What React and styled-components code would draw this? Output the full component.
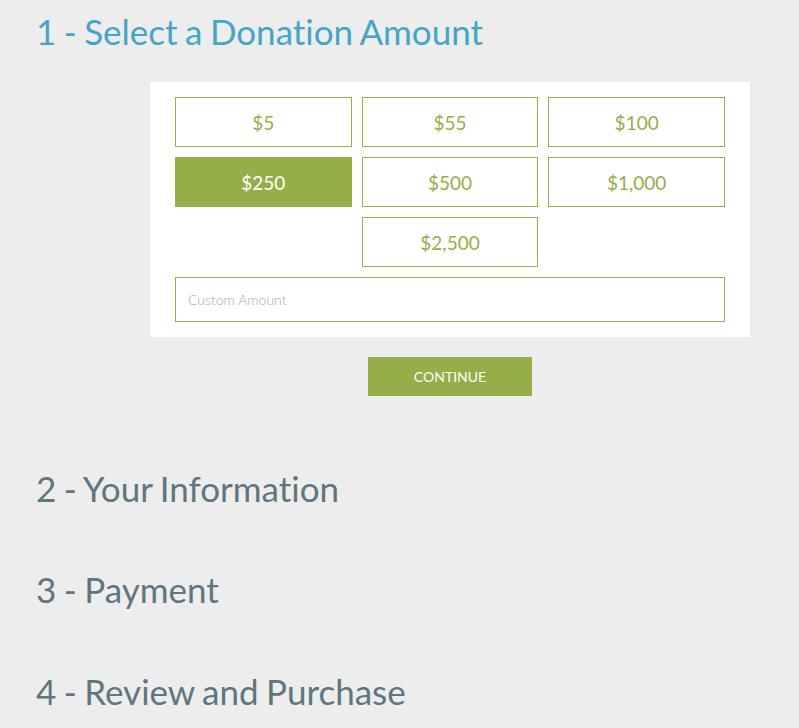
import React, { useState } from 'react';
import styled, { createGlobalStyle } from 'styled-components';

const GlobalStyle = createGlobalStyle`
  html, body {
    margin: 0;
    padding: 0;
    background: #ededed;
    font-family: Lato, "Open Sans", Arial, sans-serif;
  }
`;

const Page = styled.div`
  display: flex;
  flex-direction: column;
  padding: 10px 0 40px 36px;
`;

const StepTitle = styled.h2`
  margin: 0;
  font-size: 35px;
  line-height: 42px;
  font-weight: 400;
  word-spacing: -1.5px;
  font-variant-ligatures: none;
  font-feature-settings: "liga" 0, "clig" 0, "dlig" 0;
  color: ${props => (props.active ? '#44a6c6' : '#5e7680')};
`;

const Panel = styled.div`
  width: 550px;
  margin: 30px 0 0 114px;
  padding: 15px 25px;
  background: #fff;
  display: flex;
  flex-direction: column;
  gap: 10px;
`;

const AmountGrid = styled.div`
  display: grid;
  grid-template-columns: repeat(3, 1fr);
  gap: 10px;
`;

const AmountButton = styled.button`
  height: 50px;
  border: 1px solid #96ae48;
  background: ${props => (props.selected ? '#96ae48' : '#fff')};
  color: ${props => (props.selected ? '#fff' : '#96ae48')};
  font-family: Lato, "Open Sans", Arial, sans-serif;
  font-size: 19px;
  padding: 1px 0 0;
  cursor: pointer;
  grid-column: ${props => props.col || 'auto'};
`;

const CustomInput = styled.input`
  box-sizing: border-box;
  width: 100%;
  height: 45px;
  border: 1px solid #96ae48;
  padding: 0 12px;
  font-family: Lato, "Open Sans", Arial, sans-serif;
  font-size: 14px;
  font-weight: 300;
  outline: none;

  &::placeholder {
    color: #a9a9a9;
  }
`;

const ContinueRow = styled.div`
  width: 600px;
  margin-left: 114px;
  margin-top: 20px;
  display: flex;
  justify-content: center;
`;

const ContinueButton = styled.button`
  width: 164px;
  height: 39px;
  border: none;
  background: #96ae48;
  color: #fff;
  font-family: Lato, "Open Sans", Arial, sans-serif;
  font-size: 14px;
  text-transform: uppercase;
  cursor: pointer;
`;

const Step = styled.div`
  margin-top: ${props => props.gap}px;
`;

const amounts = ['$5', '$55', '$100', '$250', '$500', '$1,000', '$2,500'];

const App = () => {
  const [selected, setSelected] = useState('$250');

  return (
    <>
      <GlobalStyle />
      <Page>
        <StepTitle active>1 - Select a Donation Amount</StepTitle>
        <Panel>
          <AmountGrid>
            {amounts.map(a => (
              <AmountButton
                key={a}
                selected={selected === a}
                col={a === '$2,500' ? '2' : undefined}
                onClick={() => setSelected(a)}
              >
                {a}
              </AmountButton>
            ))}
          </AmountGrid>
          <CustomInput placeholder="Custom Amount" />
        </Panel>
        <ContinueRow>
          <ContinueButton>Continue</ContinueButton>
        </ContinueRow>
        <Step gap={71}>
          <StepTitle>2 - Your Information</StepTitle>
        </Step>
        <Step gap={59}>
          <StepTitle>3 - Payment</StepTitle>
        </Step>
        <Step gap={60}>
          <StepTitle>4 - Review and Purchase</StepTitle>
        </Step>
      </Page>
    </>
  );
};

export default App;
